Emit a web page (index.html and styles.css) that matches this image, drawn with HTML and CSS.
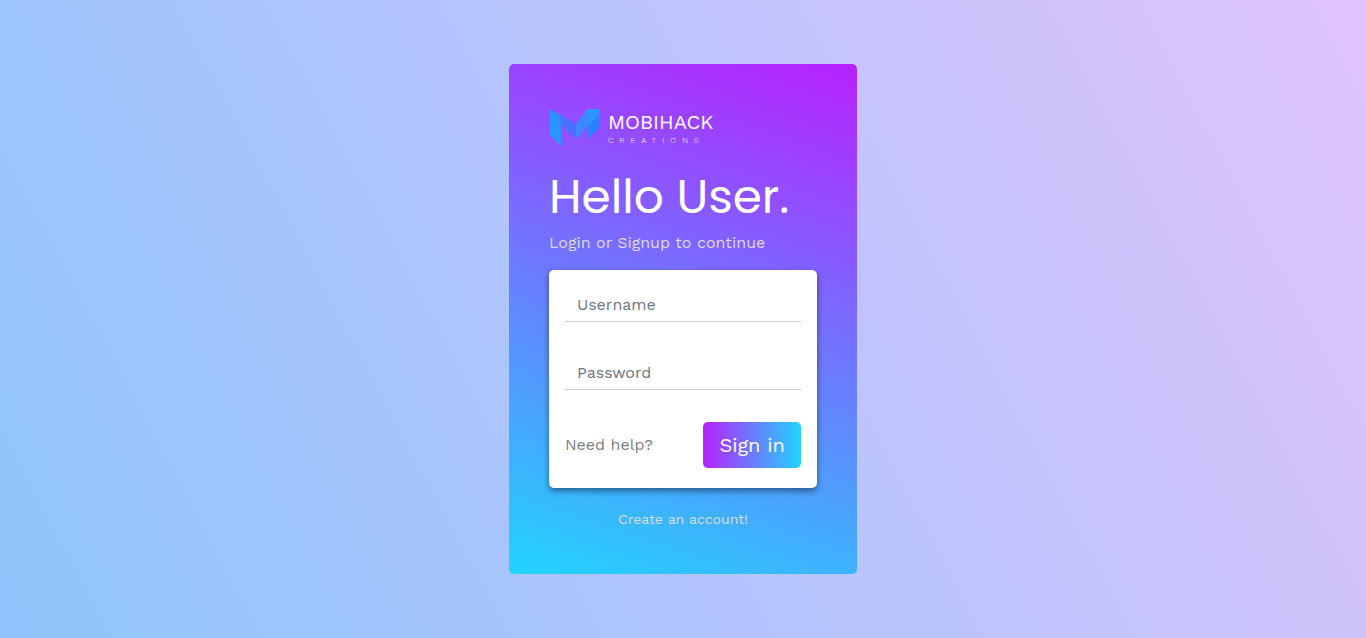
FILE: index.html
```html
<!DOCTYPE html>
<html lang="en">
<head>
<meta charset="utf-8">
<meta name="viewport" content="width=device-width, initial-scale=1">
<title>Mobihack Creations</title>
<link rel="stylesheet" href="styles.css">
</head>
<body>
<main class="panel">
  <svg class="logo" viewBox="0 0 168 40" role="img" aria-label="Mobihack Creations">
    <path fill="#2997ff" d="M1 1L12 9V38L1 27Z"/>
    <path fill="#3a88ff" d="M1 1L12 7V17Z"/>
    <path fill="#4a70ff" d="M12 7L27 16V31L12 16Z"/>
    <path fill="#3f86ff" d="M27 16L38 1H41L39 18L27 31Z"/>
    <path fill="#2e93ff" d="M38 1H50V8L39 19Z"/>
    <path fill="#2b80ff" d="M50 7V20L39 31V18Z"/>
    <text class="logo-name" x="59" y="21">MOBIHACK</text>
    <text class="logo-sub" x="59" y="35">CREATIONS</text>
  </svg>
  <h1 class="title">Hello User.</h1>
  <p class="subtitle">Login or Signup to continue</p>
  <form class="card">
    <input class="field" type="text" placeholder="Username" aria-label="Username">
    <input class="field" type="password" placeholder="Password" aria-label="Password">
    <div class="actions">
      <a class="help" href="#">Need help?</a>
      <button class="submit" type="button">Sign in</button>
    </div>
  </form>
  <a class="create" href="#">Create an account!</a>
</main>
</body>
</html>
```

FILE: styles.css
```css
* { box-sizing: border-box; }
body {
  margin: 0;
  min-height: 100vh;
  display: flex;
  align-items: center;
  justify-content: center;
  font-family: "Work Sans", "Noto Sans", sans-serif;
  font-size: 16px;
  line-height: 24px;
  background: linear-gradient(62deg, #8ec5fc 0%, #e0c3fc 100%);
}
.panel {
  display: flex;
  flex-direction: column;
  width: 348px;
  padding: 44px 40px;
  border-radius: 5px;
  background: linear-gradient(19deg, #21d4fd 0%, #b721ff 100%);
}
.logo { width: 168px; height: 40px; }
.logo-name { font: 400 20px "Work Sans", "Liberation Sans", sans-serif; fill: #fff; }
.logo-sub { font: 300 8px "Work Sans", "Liberation Sans", sans-serif; letter-spacing: 6px; fill: #fff; }
.title {
  margin: 20px 0 5px;
  color: #fff;
  font: 400 47px/58px Poppins, Inter, sans-serif;
}
.subtitle { margin: 0 0 15px; color: #dcdcdc; }
.card {
  padding: 16px 16px 20px;
  border-radius: 5px;
  background: #fff;
  box-shadow: 0 3px 6px rgba(0, 0, 0, .45);
}
.field {
  display: block;
  width: 100%;
  margin-bottom: 32px;
  padding: 6px 12px 5px;
  border: 0;
  border-bottom: 1px solid #ccc;
  background: transparent;
  font: inherit;
  line-height: 24px;
  height: 36px;
}
.field::placeholder { color: #6c757d; }
.actions { display: flex; justify-content: space-between; align-items: center; }
.help { color: #808080; text-decoration: none; }
.submit {
  height: 46px;
  padding: 8px 16px;
  border: 0;
  border-radius: 5px;
  color: #fff;
  font: 400 20px/30px "Work Sans", "Noto Sans", sans-serif;
  background: linear-gradient(to right, #b721ff, #21d4fd);
}
.create { align-self: center; margin-top: 20px; color: #dcdcdc; font-size: 14px; line-height: 22px; text-decoration: none; }
```
